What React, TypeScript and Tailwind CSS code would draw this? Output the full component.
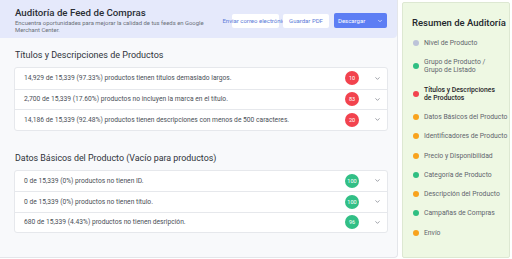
import { ChevronDown } from "lucide-react";

const font = { fontFamily: "Roboto, 'Liberation Sans', sans-serif" };

type Row = { text: string; score: number; tone: "red" | "green" };

const titleRows: Row[] = [
  { text: "14,929 de 15,339 (97.33%) productos tienen títulos demasiado largos.", score: 10, tone: "red" },
  { text: "2,700 de 15,339 (17.60%) productos no incluyen la marca en el título.", score: 83, tone: "red" },
  { text: "14,186 de 15,339 (92.48%) productos tienen descripciones con menos de 500 caracteres.", score: 20, tone: "red" },
];

const basicRows: Row[] = [
  { text: "0 de 15,339 (0%) productos no tienen ID.", score: 100, tone: "green" },
  { text: "0 de 15,339 (0%) productos no tienen título.", score: 100, tone: "green" },
  { text: "680 de 15,339 (4.43%) productos no tienen desripción.", score: 96, tone: "green" },
];

const summary = [
  { label: ["Nivel de Producto"], color: "bg-[#bcc3d8]" },
  { label: ["Grupo de Producto /", "Grupo de Listado"], color: "bg-[#2fbf82]" },
  { label: ["Títulos y Descripciones", "de Productos"], color: "bg-[#f2434e]", active: true },
  { label: ["Datos Básicos del Producto"], color: "bg-[#f8a31d]" },
  { label: ["Identificadores de Producto"], color: "bg-[#f8a31d]" },
  { label: ["Precio y Disponibilidad"], color: "bg-[#f8a31d]" },
  { label: ["Categoría de Producto"], color: "bg-[#2fbf82]" },
  { label: ["Descripción del Producto"], color: "bg-[#f8a31d]" },
  { label: ["Campañas de Compras"], color: "bg-[#2fbf82]" },
  { label: ["Envío"], color: "bg-[#f8a31d]" },
];

function IssueCard({ rows }: { rows: Row[] }) {
  return (
    <div className="ml-[14px] w-[374px] bg-white border border-[#e6e8ec] rounded-[3px]">
      {rows.map((r, i) => (
        <div
          key={i}
          className={`flex items-center h-[20.5px] pl-[9px] pr-[6px] ${i > 0 ? "border-t border-[#e6e8ec]" : ""}`}
        >
          <span className="flex-1 text-[6.7px] text-[#4a4f57] whitespace-nowrap">{r.text}</span>
          <span
            className={`w-[14px] h-[14px] rounded-full flex items-center justify-center text-[5.5px] text-white ${
              r.tone === "red" ? "bg-[#f2434e]" : "bg-[#32bf86]"
            }`}
          >
            {r.score}
          </span>
          <ChevronDown className="ml-[15px] w-[7px] h-[7px] text-[#7a7f88]" strokeWidth={2.5} />
        </div>
      ))}
    </div>
  );
}

export default function App() {
  return (
    <div className="flex w-[512px] h-[259px] bg-white overflow-hidden" style={font}>
      <div className="w-[398px] h-[258px] bg-[#f8f9fb] border-r border-b border-[#e4e6ea] rounded-br-[4px] flex flex-col">
        <div className="h-[38px] bg-[#e5e9fb] rounded-br-[4px] flex items-start pl-[15px] pr-[10px] pt-[7px]">
          <div className="w-[200px]">
            <div className="text-[9.7px] leading-[12px] text-[#2a2e35] font-medium">Auditoría de Feed de Compras</div>
            <div className="text-[5.9px] leading-[7px] text-[#6b707a] mt-[1px]">
              Encuentra oportunidades para mejorar la calidad de tus feeds en Google Merchant Center.
            </div>
          </div>
          <div className="flex items-center ml-auto mt-[6px]">
            <button className="w-[47px] h-[14px] bg-white rounded-[2px] flex items-center justify-center whitespace-nowrap text-[6px] text-[#5b7bd8]">
              Enviar correo electrónico
            </button>
            <button className="ml-[4px] w-[46px] h-[14px] bg-white rounded-[2px] flex items-center justify-center text-[6px] text-[#5b7bd8]">
              Guardar PDF
            </button>
            <button className="ml-[5px] w-[53px] h-[15px] bg-[#5d7ef4] rounded-[2px] flex items-center pl-[4px] pr-[4px] text-[6px] text-white">
              Descargar
              <ChevronDown className="ml-auto w-[6px] h-[6px]" strokeWidth={2.5} />
            </button>
          </div>
        </div>

        <div className="pl-[15px] mt-[11px] text-[9px] leading-[12px] text-[#2f333a]">
          Títulos y Descripciones de Productos
        </div>
        <div className="mt-[6px]">
          <IssueCard rows={titleRows} />
        </div>

        <div className="pl-[15px] mt-[21px] text-[8.9px] leading-[12px] text-[#2f333a]">
          Datos Básicos del Producto (Vacío para productos)
        </div>
        <div className="mt-[6px]">
          <IssueCard rows={basicRows} />
        </div>
      </div>

      <div className="ml-[4px] mt-[2px] w-[108px] h-[256px] bg-[#eef8e3] border border-[#dde8d2] rounded-[2px] pl-[9px] pr-[2px] pt-[14px]">
        <div className="text-[9.5px] leading-[12px] text-[#23272d] font-medium">Resumen de Auditoría</div>
        <div className="mt-[4px] flex flex-col">
          {summary.map((s, i) => (
            <div
              key={i}
              className={`flex items-center ${s.label.length > 1 ? "h-[27.5px]" : "h-[19.3px]"}`}
            >
              <span className={`w-[6px] h-[6px] rounded-full shrink-0 ml-[1px] ${s.color}`} />
              <span
                className={`ml-[5px] text-[6.8px] leading-[8px] whitespace-nowrap ${
                  s.active ? "text-[#1f2328] font-medium" : "text-[#5f646d]"
                }`}
              >
                {s.label.map((l, j) => (
                  <span key={j} className="block">
                    {l}
                  </span>
                ))}
              </span>
            </div>
          ))}
        </div>
      </div>
    </div>
  );
}
